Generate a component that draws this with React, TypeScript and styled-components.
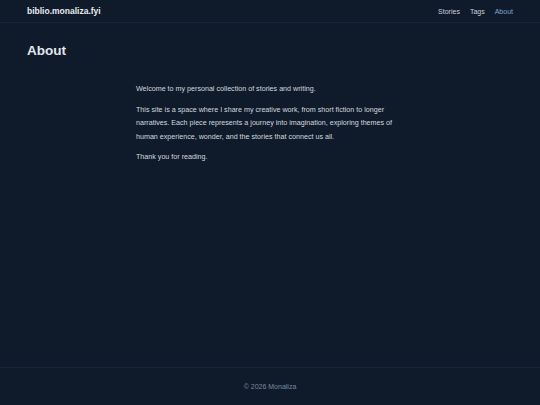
import React from "react";
import styled, { createGlobalStyle } from "styled-components";

const colors = {
	bg: "#0f1b2b",
	border: "#17243a",
	logo: "#e6e9ee",
	nav: "#c9d1dc",
	navActive: "#7ea6c8",
	heading: "#e4e7ec",
	text: "#d3d8df",
	muted: "#7c899b",
};

const GlobalStyle = createGlobalStyle`
	html, body {
		margin: 0;
		padding: 0;
		background: ${colors.bg};
	}
	body {
		font-family: "Liberation Sans", Arial, sans-serif;
		-webkit-font-smoothing: antialiased;
	}
	* {
		box-sizing: border-box;
	}
`;

const navLinks = [
	{ label: "Stories", active: false },
	{ label: "Tags", active: false },
	{ label: "About", active: true },
];

export default function App() {
	return (
		<Page>
			<GlobalStyle />
			<Header>
				<Logo href="#">biblio.monaliza.fyi</Logo>
				<Nav>
					{navLinks.map((link) => (
						<NavLink key={link.label} href="#" $active={link.active}>
							{link.label}
						</NavLink>
					))}
				</Nav>
			</Header>
			<Main>
				<Title>About</Title>
				<Prose>
					<p>Welcome to my personal collection of stories and writing.</p>
					<p>
						This site is a space where I share my creative work, from short
						fiction to longer narratives. Each piece represents a journey into
						imagination, exploring themes of human experience, wonder, and the
						stories that connect us all.
					</p>
					<p>Thank you for reading.</p>
				</Prose>
			</Main>
			<Footer>
				<FooterText>© 2026 Monaliza</FooterText>
			</Footer>
		</Page>
	);
}

const Page = styled.div`
	min-height: 100vh;
	display: flex;
	flex-direction: column;
	background: ${colors.bg};
`;

const Header = styled.header`
	height: 23px;
	padding: 0 27px;
	display: flex;
	align-items: center;
	justify-content: space-between;
	border-bottom: 1px solid ${colors.border};
`;

const Logo = styled.a`
	color: ${colors.logo};
	font-size: 8.5px;
	font-weight: 700;
	text-decoration: none;
	line-height: 1;
`;

const Nav = styled.nav`
	display: flex;
	align-items: center;
	gap: 10px;
`;

const NavLink = styled.a<{ $active?: boolean }>`
	color: ${(p) => (p.$active ? colors.navActive : colors.nav)};
	font-size: 7px;
	text-decoration: none;
	line-height: 1;
`;

const Main = styled.main`
	flex: 1;
	padding: 19px 27px 0;
`;

const Title = styled.h1`
	margin: 0;
	color: ${colors.heading};
	font-size: 13.5px;
	font-weight: 700;
	line-height: 17px;
`;

const Prose = styled.div`
	max-width: 268px;
	margin: 24px auto 0;
	color: ${colors.text};
	font-size: 7.15px;
	line-height: 13.5px;
	p {
		margin: 0;
		+ p {
			margin-top: 7px;
		}
	}
`;

const Footer = styled.footer`
	height: 38px;
	border-top: 1px solid ${colors.border};
	display: flex;
	align-items: center;
	justify-content: center;
`;

const FooterText = styled.p`
	margin: 0;
	color: ${colors.muted};
	font-size: 7px;
	line-height: 1;
`;
